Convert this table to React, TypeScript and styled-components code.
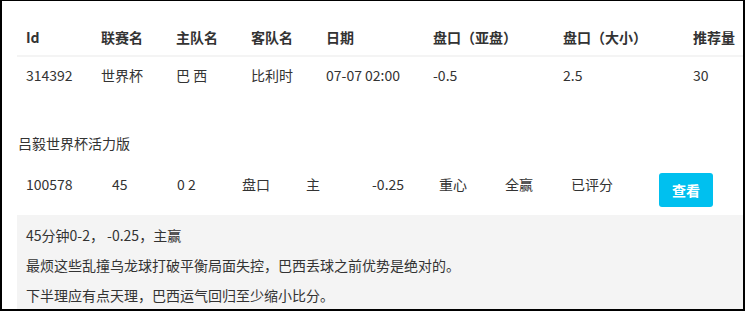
import React from 'react';
import styled, { createGlobalStyle } from 'styled-components';

const GlobalStyle = createGlobalStyle`
  html, body {
    margin: 0;
    padding: 0;
    background: #fff;
  }
  body {
    font-family: "Noto Sans CJK SC", "Liberation Sans", sans-serif;
    font-size: 14px;
    line-height: 20px;
    color: #333;
  }
`;

const Frame = styled.div`
  box-sizing: border-box;
  width: 745px;
  height: 311px;
  border: 1px solid #000;
  border-left-width: 2px;
  border-right-width: 2px;
  border-bottom-width: 2px;
  padding: 18px 0 0 15px;
  overflow: hidden;
`;

const Table = styled.div`
  display: grid;
  grid-template-columns: 75px 75px 75px 75px 107px 130px 130px 1fr;
`;

const HeadCell = styled.div`
  padding: 8px 0 8px 9px;
  font-weight: bold;
  white-space: nowrap;
  border-bottom: 2px solid #f4f4f4;
`;

const Cell = styled.div`
  padding: 8px 0 8px 9px;
  white-space: nowrap;
`;

const Title = styled.div`
  margin-top: 40px;
  padding-left: 1px;
`;

const ScoreRow = styled.div`
  display: grid;
  grid-template-columns: 86px 65px 65px 64px 66px 67px 66px 66px 88px auto;
  align-items: start;
  margin-top: 20px;
  padding-left: 9px;
`;

const ScoreItem = styled.span`
  padding-top: 1px;
  white-space: nowrap;
`;

const ViewButton = styled.button`
  width: 54px;
  height: 34px;
  border: none;
  border-radius: 3px;
  background: #00c0ef;
  color: #fff;
  font-family: inherit;
  font-size: 14px;
  font-weight: bold;
  padding: 0;
  cursor: pointer;
`;

const Comment = styled.div`
  margin-top: 8px;
  background: #f4f4f4;
  padding: 10px 9px 20px 9px;
  p {
    margin: 0 0 10px 0;
  }
`;

const headers = ['Id', '联赛名', '主队名', '客队名', '日期', '盘口（亚盘）', '盘口（大小）', '推荐量'];
const row = ['314392', '世界杯', '巴 西', '比利时', '07-07 02:00', '-0.5', '2.5', '30'];
const score = ['100578', '45', '0 2', '盘口', '主', '-0.25', '重心', '全赢', '已评分'];
const lines = [
  '45分钟0-2， -0.25，主赢',
  '最烦这些乱撞乌龙球打破平衡局面失控，巴西丢球之前优势是绝对的。',
  '下半理应有点天理，巴西运气回归至少缩小比分。',
];

const App = () => {
  return (
    <>
      <GlobalStyle />
      <Frame>
        <Table>
          {headers.map((h) => (
            <HeadCell key={h}>{h}</HeadCell>
          ))}
          {row.map((c, i) => (
            <Cell key={i}>{c}</Cell>
          ))}
        </Table>
        <Title>吕毅世界杯活力版</Title>
        <ScoreRow>
          {score.map((s, i) => (
            <ScoreItem key={i}>{s}</ScoreItem>
          ))}
          <ViewButton>查看</ViewButton>
        </ScoreRow>
        <Comment>
          {lines.map((l, i) => (
            <p key={i}>{l}</p>
          ))}
        </Comment>
      </Frame>
    </>
  );
};

export default App;
